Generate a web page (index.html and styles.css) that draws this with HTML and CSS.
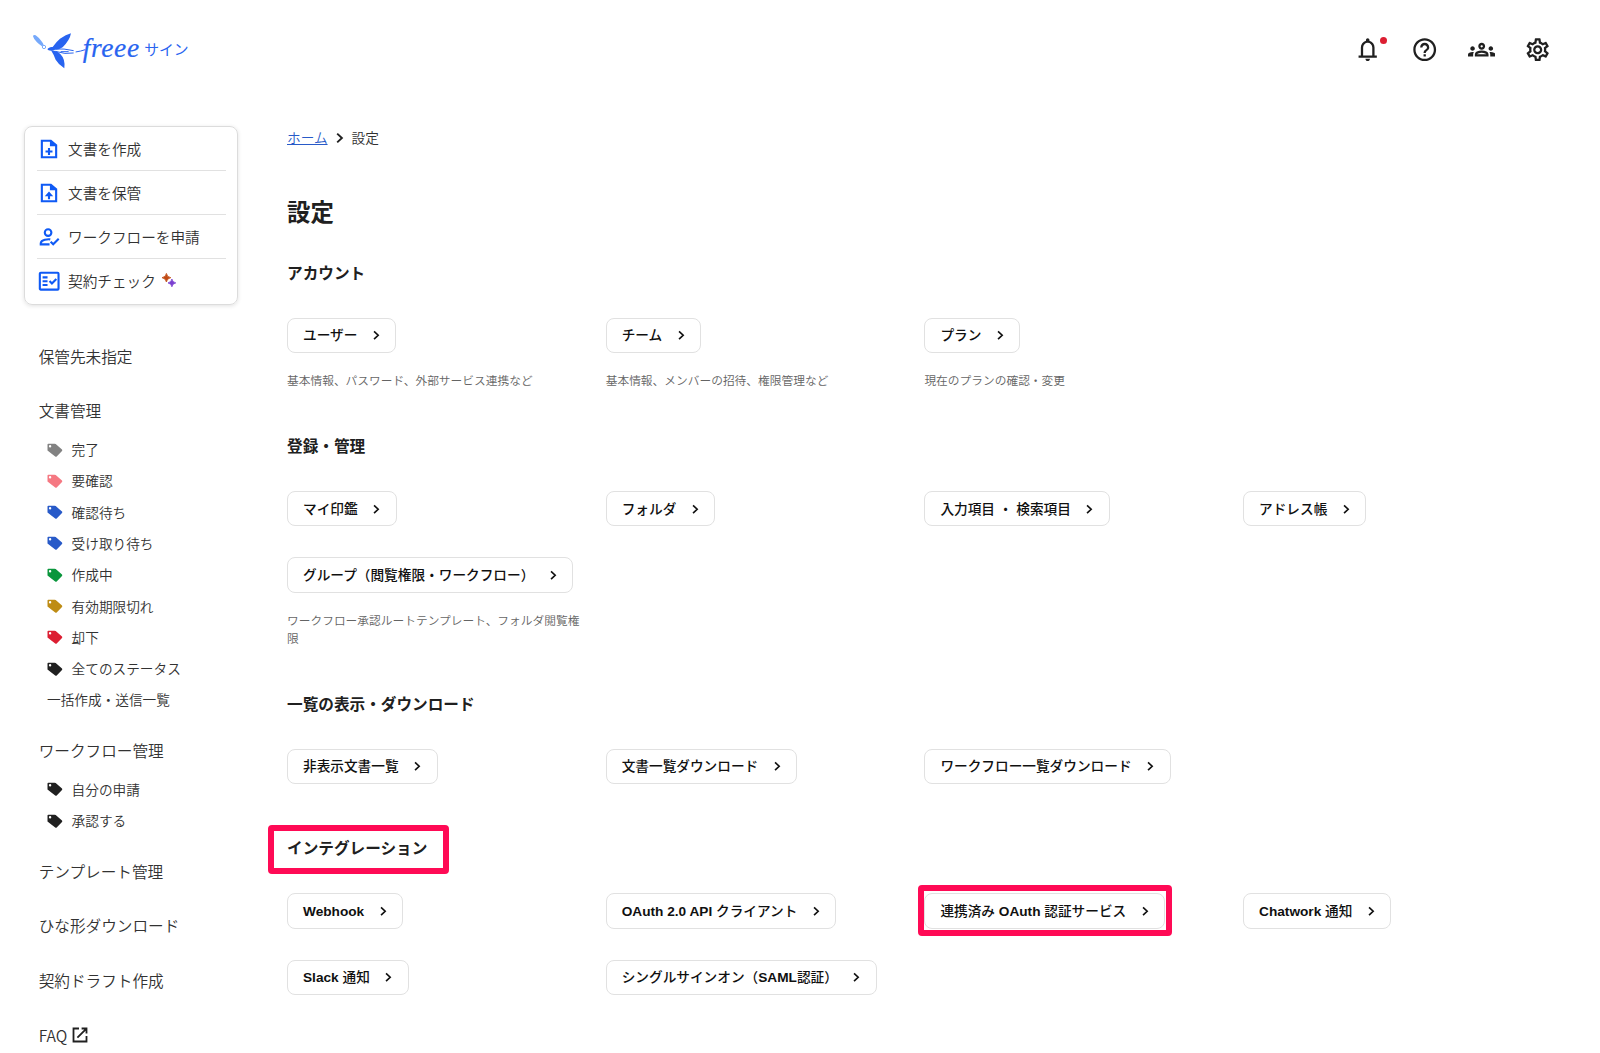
FILE: index.html
```html
<!DOCTYPE html>
<html lang="ja">
<head>
<meta charset="utf-8">
<title>設定</title>
<link rel="stylesheet" href="styles.css">
</head>
<body>
<svg class="defs" width="0" height="0">
  <symbol id="chev" viewBox="0 0 8 12"><path d="M1.2 1.6 5.9 6 1.2 10.4" fill="none" stroke="currentColor" stroke-width="1.9"/></symbol>
  <symbol id="tag" viewBox="0 0 16 15"><path fill="currentColor" fill-rule="evenodd" d="M.5 1.6Q.5.7 1.4.7H7.6Q8.2.7 8.7 1.1L15 6.6Q15.6 7.3 15 7.9L9.7 13.5Q9 14.1 8.2 13.5L1.1 8.1Q.5 7.6.5 6.9ZM3.1 2.1A1.2 1.2 0 1 0 3.1 4.5 1.2 1.2 0 1 0 3.1 2.1Z"/></symbol>
</svg>
<header class="header">
  <div class="logo">
    <svg class="bird" viewBox="36 36 136 112">
      <path fill="#76a9fb" d="M39 49Q40 43 47 46Q58 54 64 63Q70 70 71 75L66 79Q58 74 51 67Q41 58 39 49Z"/>
      <circle cx="72" cy="81" r="5" fill="none" stroke="#76a9fb" stroke-width="3"/>
      <path fill="#2864f0" d="M153 40Q150 60 128 82Q118 90 102 90Q94 94 84 90Q80 87 86 84Q92 80 98 81Q108 66 120 56Q138 44 153 40Z"/>
      <path fill="#2864f0" d="M93 91Q108 91 121 102Q137 118 133 145Q116 134 107 119Q102 105 93 91Z"/>
      <path fill="none" stroke="#2864f0" stroke-width="3" d="M108 87Q130 85 161 92M106 94Q136 104 161 99M122 95H146M167 96Q182 94 196 89"/>
    </svg>
    <span class="logo-name">freee</span><span class="logo-product">サイン</span>
  </div>
  <nav class="tools">
    <span class="bell"><svg class="tool" viewBox="0 0 24 24"><path d="M4 19v-2h2v-7q0-2.075 1.25-3.687T10.5 4.2v-.7q0-.625.438-1.062T12 2t1.063.438T13.5 3.5v.7q2 .5 3.25 2.113T18 10v7h2v2zm8 3q-.825 0-1.412-.587T10 20h4q0 .825-.587 1.413T12 22m-4-5h8v-7q0-1.65-1.175-2.825T12 6 9.175 7.175 8 10z"/></svg><i class="dot"></i></span>
    <svg class="tool" viewBox="0 0 24 24"><path d="M11 18h2v-2h-2v2zm1-16C6.48 2 2 6.48 2 12s4.48 10 10 10 10-4.48 10-10S17.52 2 12 2zm0 18c-4.41 0-8-3.59-8-8s3.59-8 8-8 8 3.59 8 8-3.59 8-8 8zm0-14c-2.21 0-4 1.79-4 4h2c0-1.1.9-2 2-2s2 .9 2 2c0 2-3 1.75-3 5h2c0-2.25 3-2.5 3-5 0-2.21-1.79-4-4-4z"/></svg>
    <svg class="tool" viewBox="0 0 24 24"><path d="M4 13c1.1 0 2-.9 2-2s-.9-2-2-2-2 .9-2 2 .9 2 2 2zm1.13 1.1C4.76 14.04 4.39 14 4 14c-.99 0-1.93.21-2.78.58C.48 14.9 0 15.62 0 16.43V18h4.5v-1.61c0-.83.23-1.61.63-2.29zM20 13c1.1 0 2-.9 2-2s-.9-2-2-2-2 .9-2 2 .9 2 2 2zm4 3.43c0-.81-.48-1.53-1.22-1.85-.85-.37-1.79-.58-2.78-.58-.39 0-.76.04-1.13.1.4.68.63 1.46.63 2.29V18H24v-1.57zM16.24 13.65c-1.17-.52-2.61-.9-4.24-.9s-3.07.39-4.24.9C6.68 14.13 6 15.21 6 16.39V18h12v-1.61c0-1.18-.68-2.26-1.76-2.74zM8.07 16c.09-.23.13-.39.91-.69.97-.38 1.99-.56 3.02-.56s2.05.18 3.02.56c.77.3.81.46.91.69H8.07zM12 8c.55 0 1 .45 1 1s-.45 1-1 1-1-.45-1-1 .45-1 1-1m0-2c-1.66 0-3 1.34-3 3s1.34 3 3 3 3-1.34 3-3-1.34-3-3-3z"/></svg>
    <svg class="tool" viewBox="0 0 24 24"><path d="M19.43 12.98c.04-.32.07-.64.07-.98 0-.34-.03-.66-.07-.98l2.11-1.65c.19-.15.24-.42.12-.64l-2-3.46c-.09-.16-.26-.25-.44-.25-.06 0-.12.01-.17.03l-2.49 1c-.52-.4-1.08-.73-1.69-.98l-.38-2.65C14.46 2.18 14.25 2 14 2h-4c-.25 0-.46.18-.49.42l-.38 2.65c-.61.25-1.17.59-1.69.98l-2.49-1c-.06-.02-.12-.03-.18-.03-.17 0-.34.09-.43.25l-2 3.46c-.13.22-.07.49.12.64l2.11 1.65c-.04.32-.07.65-.07.98 0 .33.03.66.07.98l-2.11 1.65c-.19.15-.24.42-.12.64l2 3.46c.09.16.26.25.44.25.06 0 .12-.01.17-.03l2.49-1c.52.4 1.08.73 1.69.98l.38 2.65c.03.24.24.42.49.42h4c.25 0 .46-.18.49-.42l.38-2.65c.61-.25 1.17-.59 1.69-.98l2.49 1c.06.02.12.03.18.03.17 0 .34-.09.43-.25l2-3.46c.12-.22.07-.49-.12-.64l-2.11-1.65zm-1.98-1.71c.04.31.05.52.05.73 0 .21-.02.43-.05.73l-.14 1.13.89.7 1.08.84-.7 1.21-1.27-.51-1.04-.42-.9.68c-.43.32-.84.56-1.25.73l-1.06.43-.16 1.13-.2 1.35h-1.4l-.19-1.35-.16-1.13-1.06-.43c-.43-.18-.83-.41-1.23-.71l-.91-.7-1.06.43-1.27.51-.7-1.21 1.08-.84.89-.7-.14-1.13c-.03-.31-.05-.54-.05-.74s.02-.43.05-.73l.14-1.13-.89-.7-1.08-.84.7-1.21 1.27.51 1.04.42.9-.68c.43-.32.84-.56 1.25-.73l1.06-.43.16-1.13.2-1.35h1.39l.19 1.35.16 1.13 1.06.43c.43.18.83.41 1.23.71l.91.7 1.06-.43 1.27-.51.7 1.21-1.07.85-.89.7.14 1.13zM12 8c-2.21 0-4 1.79-4 4s1.79 4 4 4 4-1.79 4-4-1.79-4-4-4zm0 6c-1.1 0-2-.9-2-2s.9-2 2-2 2 .9 2 2-.9 2-2 2z"/></svg>
  </nav>
</header>
<div class="body">
  <aside class="sidebar">
    <div class="card">
      <a class="action"><svg class="act-icon" viewBox="0 0 24 24"><path d="M4.2 3h9.8L19.8 8V21H4.2Z"/><path class="solid" d="M13 2.5V9h7.2Z"/><path d="M12 11v7.6M8.2 14.8h7.6"/></svg>文書を作成</a>
      <a class="action"><svg class="act-icon" viewBox="0 0 24 24"><path d="M4.2 3h9.8L19.8 8V21H4.2Z"/><path class="solid" d="M13 2.5V9h7.2ZM12 10.4 16.6 15.6H7.4Z"/><path d="M12 13v5.8"/></svg>文書を保管</a>
      <a class="action"><svg class="act-icon" viewBox="0 0 24 24"><circle cx="11" cy="7.2" r="3.6"/><path d="M12.6 20H3v-1.4Q3.4 16 7.4 15 11 14.1 13.4 14.6M13.8 17.2l2.8 2.8 6-6"/></svg>ワークフローを申請</a>
      <a class="action"><svg class="act-icon" viewBox="0 0 24 24"><rect x="2" y="3" width="20.4" height="18.4" rx="1"/><path d="M5 8h5.4M5 12.2h5.4M5 16.4h5.4M12.6 12l2.6 2.8 4.8-5"/></svg>契約チェック<svg class="spark" viewBox="0 0 14 14"><path fill="#c04a14" d="M4.4.4Q4.9 4 8.8 4.7 4.9 5.4 4.4 9 3.9 5.4 0 4.7 3.9 4 4.4.4Z" stroke="#c04a14" stroke-width=".8"/><path fill="#7a3fd0" d="M9.9 6Q10.3 9.2 13.8 9.9 10.3 10.6 9.9 13.8 9.5 10.6 6 9.9 9.5 9.2 9.9 6Z" stroke="#7a3fd0" stroke-width=".8"/></svg></a>
    </div>
    <nav class="menu">
      <a class="head">保管先未指定</a>
      <div class="group">
        <a class="head">文書管理</a>
        <div class="subs">
          <a class="sub"><svg class="tag gray"><use href="#tag"/></svg>完了</a>
          <a class="sub"><svg class="tag pink"><use href="#tag"/></svg>要確認</a>
          <a class="sub"><svg class="tag blue"><use href="#tag"/></svg>確認待ち</a>
          <a class="sub"><svg class="tag blue"><use href="#tag"/></svg>受け取り待ち</a>
          <a class="sub"><svg class="tag green"><use href="#tag"/></svg>作成中</a>
          <a class="sub"><svg class="tag gold"><use href="#tag"/></svg>有効期限切れ</a>
          <a class="sub"><svg class="tag red"><use href="#tag"/></svg>却下</a>
          <a class="sub"><svg class="tag black"><use href="#tag"/></svg>全てのステータス</a>
          <a class="sub">一括作成・送信一覧</a>
        </div>
      </div>
      <div class="group">
        <a class="head">ワークフロー管理</a>
        <div class="subs">
          <a class="sub"><svg class="tag black"><use href="#tag"/></svg>自分の申請</a>
          <a class="sub"><svg class="tag black"><use href="#tag"/></svg>承認する</a>
        </div>
      </div>
      <a class="head">テンプレート管理</a>
      <a class="head">ひな形ダウンロード</a>
      <a class="head">契約ドラフト作成</a>
      <a class="head">FAQ<svg class="ext" viewBox="0 0 16 16"><path d="M7 1.5H1.5v13h13V9M9.6 1.5h4.9v4.9M14.2 1.8 5.4 10.6"/></svg></a>
    </nav>
  </aside>
  <main class="main">
    <div class="crumbs"><a class="home">ホーム</a><svg class="crumb-chev"><use href="#chev"/></svg><span>設定</span></div>
    <h1 class="title">設定</h1>
    <section class="section">
      <h2 class="section-title">アカウント</h2>
      <div class="grid">
        <div><a class="btn"><span>ユーザー</span><svg class="chev"><use href="#chev"/></svg></a><p class="desc">基本情報、パスワード、外部サービス連携など</p></div>
        <div><a class="btn"><span>チーム</span><svg class="chev"><use href="#chev"/></svg></a><p class="desc">基本情報、メンバーの招待、権限管理など</p></div>
        <div><a class="btn"><span>プラン</span><svg class="chev"><use href="#chev"/></svg></a><p class="desc">現在のプランの確認・変更</p></div>
      </div>
    </section>
    <section class="section">
      <h2 class="section-title">登録・管理</h2>
      <div class="grid">
        <div><a class="btn"><span>マイ印鑑</span><svg class="chev"><use href="#chev"/></svg></a></div>
        <div><a class="btn"><span>フォルダ</span><svg class="chev"><use href="#chev"/></svg></a></div>
        <div><a class="btn"><span>入力項目 ・ 検索項目</span><svg class="chev"><use href="#chev"/></svg></a></div>
        <div><a class="btn"><span>アドレス帳</span><svg class="chev"><use href="#chev"/></svg></a></div>
        <div><a class="btn"><span>グループ（閲覧権限・ワークフロー）</span><svg class="chev"><use href="#chev"/></svg></a><p class="desc">ワークフロー承認ルートテンプレート、フォルダ閲覧権限</p></div>
      </div>
    </section>
    <section class="section">
      <h2 class="section-title">一覧の表示・ダウンロード</h2>
      <div class="grid">
        <div><a class="btn"><span>非表示文書一覧</span><svg class="chev"><use href="#chev"/></svg></a></div>
        <div><a class="btn"><span>文書一覧ダウンロード</span><svg class="chev"><use href="#chev"/></svg></a></div>
        <div><a class="btn"><span>ワークフロー一覧ダウンロード</span><svg class="chev"><use href="#chev"/></svg></a></div>
      </div>
    </section>
    <section class="section">
      <h2 class="section-title marked mark-title">インテグレーション</h2>
      <div class="grid">
        <div><a class="btn"><span class="latin"><b>Webhook</b></span><svg class="chev"><use href="#chev"/></svg></a></div>
        <div><a class="btn"><span><b>OAuth 2.0 API</b> クライアント</span><svg class="chev"><use href="#chev"/></svg></a></div>
        <div><a class="btn marked mark-btn"><span>連携済み <b>OAuth</b> 認証サービス</span><svg class="chev"><use href="#chev"/></svg></a></div>
        <div><a class="btn"><span><b>Chatwork</b> 通知</span><svg class="chev"><use href="#chev"/></svg></a></div>
        <div><a class="btn"><span><b>Slack</b> 通知</span><svg class="chev"><use href="#chev"/></svg></a></div>
        <div><a class="btn"><span>シングルサインオン（<b>SAML</b>認証）</span><svg class="chev"><use href="#chev"/></svg></a></div>
      </div>
    </section>
  </main>
</div>
</body>
</html>
```
FILE: styles.css
```css
* { box-sizing: border-box; }
body {
  margin: 0;
  height: 1053px;
  overflow: hidden;
  background: #fff;
  color: #323232;
  font-family: "Liberation Sans", "Noto Sans CJK JP", sans-serif;
}
.defs { display: none; }
svg { flex: none; }

.header {
  display: flex;
  justify-content: space-between;
  height: 100px;
  padding: 0 48.5px 0 32px;
}
.logo { display: flex; align-items: center; color: #2864f0; }
.bird { width: 45.3px; height: 37.3px; margin-bottom: -1px; overflow: visible; }
.logo-name {
  margin-left: 5.5px;
  font: italic 27.5px/40px "Liberation Serif", serif;
  letter-spacing: .6px;
  -webkit-text-stroke: .2px #2864f0;
  margin-bottom: 4px;
}
.logo-product {
  margin-left: 4.5px;
  font: 400 14.8px/20px "Noto Sans CJK JP", sans-serif;
  margin-bottom: 3px;
}
.tools { display: flex; align-items: center; gap: 29.2px; }
.tool { display: block; width: 27.4px; height: 27.4px; fill: #202020; }
.bell { position: relative; }
.dot {
  position: absolute;
  top: .5px;
  right: -5.5px;
  width: 7px;
  height: 7px;
  border-radius: 50%;
  background: #dc1e32;
}

.body { display: flex; padding-left: 24px; }
.sidebar {
  width: 214px;
  margin-right: 49px;
  padding-top: 26px;
  flex: none;
  font-family: "Noto Sans CJK JP", sans-serif;
  font-weight: 350;
}
.card {
  height: 179px;
  padding: 0 11px 0 12px;
  border: 1px solid #dcdcdc;
  border-radius: 8px;
  box-shadow: 0 1px 4px rgba(0, 0, 0, .12);
}
.action {
  display: flex;
  align-items: center;
  height: 44px;
  padding-bottom: 1px;
  font-size: 14.65px;
}
.action:first-child { height: 43px; padding-bottom: 0; }
.action + .action { border-top: 1px solid #e1e1e1; }
.act-icon {
  width: 22px;
  height: 22px;
  margin: 1px 8.5px 0 .5px;
  fill: none;
  stroke: #0f5af5;
  stroke-width: 2.3;
}
.act-icon .solid { fill: #0f5af5; stroke: none; }
.spark { width: 14px; height: 14px; margin-left: 6px; }

.menu {
  display: flex;
  flex-direction: column;
  gap: 23.4px;
  padding: 35.4px 0 0 14.7px;
}
.head {
  display: flex;
  align-items: center;
  height: 31.3px;
  font-size: 15.63px;
}
.subs { padding: 7.2px 0 0 8.3px; margin-bottom: -3.7px; }
.sub { display: flex; align-items: center; height: 31.27px; font-size: 13.67px; }
.tag { width: 16px; height: 15px; margin: 2px 8.6px 0 0; }
.gray { color: #828282; }
.pink { color: #f57882; }
.blue { color: #285ac8; }
.green { color: #0a963c; }
.gold { color: #be8c14; }
.red { color: #dc1e32; }
.black { color: #202020; }
.ext { width: 16px; height: 16px; margin-left: 5px; fill: none; stroke: #202020; stroke-width: 1.8; }

.main { width: 1280px; padding-top: 27.5px; }
.crumbs { display: flex; align-items: center; height: 20px; font-size: 13.67px; font-weight: 350; }
.crumbs a, .crumbs span { margin-top: -2px; }
.home { color: #285ac8; text-decoration: underline; }
.crumb-chev { width: 8px; height: 12px; margin: 0 7.5px 0 8.5px; color: #202020; }
.title {
  margin: 48.5px 0 30.5px;
  font-size: 23.4px;
  line-height: 35px;
  font-weight: 600;
  color: #202020;
}
.section { margin-bottom: 45.7px; }
.section-title {
  width: max-content;
  margin: 0 0 32px;
  font-size: 15.63px;
  line-height: 24px;
  font-weight: 600;
  color: #202020;
}
.grid {
  display: grid;
  grid-template-columns: repeat(4, 300.1px);
  gap: 23.2px 18.6px;
}
.btn {
  display: flex;
  align-items: center;
  width: max-content;
  height: 35.2px;
  margin-bottom: 7.8px;
  padding: 0 15.5px 0 15px;
  border: 1px solid #e1e1e1;
  border-radius: 8px;
  font-size: 13.67px;
  font-weight: 500;
  color: #101010;
}
.btn > span { margin-top: -2px; }
.btn > .latin { margin-top: 0; }
.chev { width: 7px; height: 10.5px; margin-left: 15.5px; }
.desc {
  margin: 19.3px 0 0;
  font-size: 11.72px;
  line-height: 17.6px;
  font-weight: 350;
  color: #646464;
}
/* Highlight frames drawn over the page */
.marked { position: relative; }
.marked::after {
  content: "";
  position: absolute;
  border: 6px solid #ff0a55;
  border-radius: 4px;
}
.mark-title::after { inset: -12px -22px -12.5px -19px; }
.mark-btn::after { inset: -9px -7.5px -8.5px -7.5px; }
```
